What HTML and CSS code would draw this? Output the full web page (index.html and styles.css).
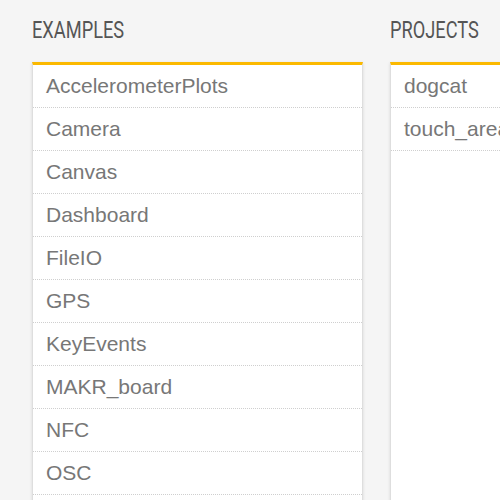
FILE: index.html
```html
<!DOCTYPE html>
<html>
<head>
<meta charset="utf-8">
<link rel="stylesheet" href="styles.css">
</head>
<body>
<div class="columns">
  <section class="column">
    <h2 class="heading"><span>EXAMPLES</span></h2>
    <ul class="card">
      <li class="row">AccelerometerPlots</li>
      <li class="row">Camera</li>
      <li class="row">Canvas</li>
      <li class="row">Dashboard</li>
      <li class="row">FileIO</li>
      <li class="row">GPS</li>
      <li class="row">KeyEvents</li>
      <li class="row">MAKR_board</li>
      <li class="row">NFC</li>
      <li class="row">OSC</li>
      <li class="row"></li>
    </ul>
  </section>
  <section class="column">
    <h2 class="heading"><span>PROJECTS</span></h2>
    <ul class="card">
      <li class="row">dogcat</li>
      <li class="row">touch_area</li>
    </ul>
  </section>
</div>
</body>
</html>
```
FILE: styles.css
```css
html, body {
  margin: 0;
  padding: 0;
  background: #f5f5f5;
  overflow: hidden;
  height: 500px;
}
.columns {
  display: grid;
  grid-template-columns: 331px 331px;
  column-gap: 27px;
  padding-left: 32px;
  padding-top: 18px;
}
.heading {
  margin: 0 0 19px 0;
  height: 25px;
  font-family: Roboto, "Liberation Sans", sans-serif;
  font-weight: 400;
  font-size: 24px;
  line-height: 25px;
  color: #555;
  white-space: nowrap;
}
.heading span {
  display: inline-block;
  transform: scaleX(0.76);
  transform-origin: left center;
}
.card {
  list-style: none;
  margin: 0;
  padding: 0;
  background: #fff;
  border: 1px solid #dedede;
  border-top: 3px solid #fbb900;
  box-shadow: 0 1px 3px rgba(0, 0, 0, 0.12);
  height: 600px;
}
.row {
  height: 42px;
  line-height: 42px;
  padding-left: 13px;
  border-bottom: 1px dotted #cfcfcf;
  font-family: "Liberation Sans", Arial, sans-serif;
  font-size: 21px;
  color: #777;
  white-space: nowrap;
  overflow: hidden;
}
```
